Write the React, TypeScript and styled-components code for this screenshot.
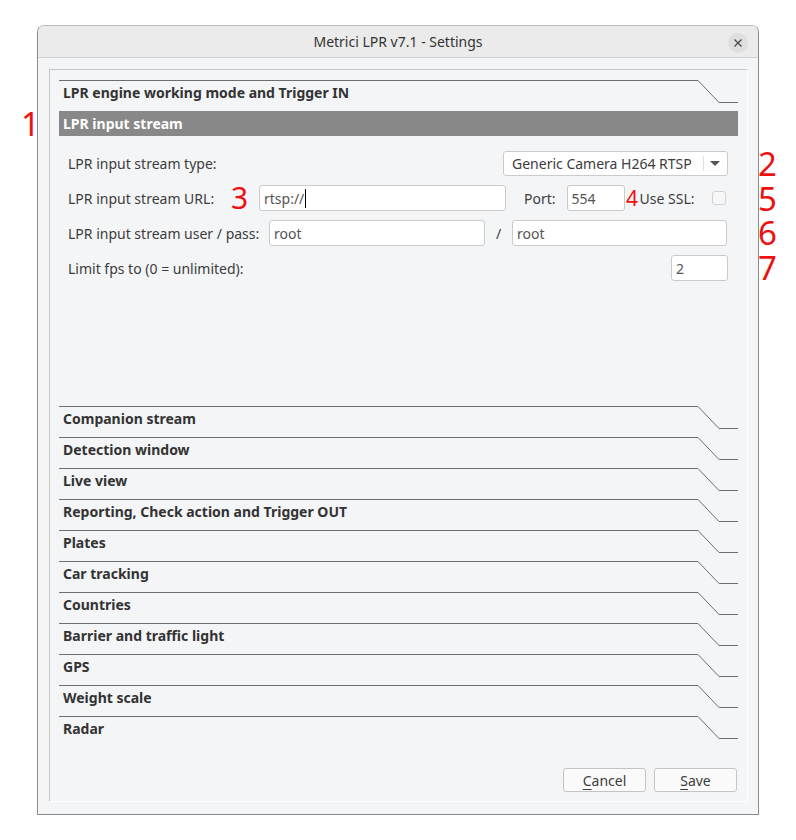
import React from "react";
import styled, { createGlobalStyle } from "styled-components";

const GlobalStyle = createGlobalStyle`
  html, body {
    margin: 0;
    background: #ffffff;
  }
  body {
    font-family: "Noto Sans", "Open Sans", sans-serif;
    font-size: 14px;
    color: #3c3c3c;
  }
`;

const sections = [
  "Companion stream",
  "Detection window",
  "Live view",
  "Reporting, Check action and Trigger OUT",
  "Plates",
  "Car tracking",
  "Countries",
  "Barrier and traffic light",
  "GPS",
  "Weight scale",
  "Radar",
];

const Page = styled.div`
  position: relative;
  width: 796px;
  height: 840px;
  padding: 25px 0 0 37px;
  box-sizing: border-box;
`;

const Window = styled.div`
  width: 722px;
  height: 790px;
  box-sizing: border-box;
  border: 1px solid #8c8c8c;
  border-top-color: #bdbdbd;
  border-radius: 7px 7px 0 0;
  background: #f4f5f7;
  display: flex;
  flex-direction: column;
  overflow: hidden;
`;

const TitleBar = styled.div`
  height: 31px;
  flex: none;
  background: #ebebeb;
  border-bottom: 1px solid #d2d2d2;
  display: flex;
  align-items: center;
  justify-content: center;
  position: relative;
`;

const Title = styled.span`
  font-size: 14px;
  color: #333;
`;

const CloseButton = styled.button`
  position: absolute;
  right: 10px;
  top: 7px;
  width: 20px;
  height: 20px;
  border-radius: 50%;
  border: none;
  padding: 0;
  background: #dedede;
  display: flex;
  align-items: center;
  justify-content: center;
`;

const Body = styled.div`
  flex: 1;
  padding: 11px 10px 12px 11px;
  display: flex;
`;

const Frame = styled.div`
  flex: 1;
  border-top: 1px solid #c8c8c8;
  border-left: 1px solid #c8c8c8;
  border-right: 1px solid #ffffff;
  border-bottom: 1px solid #ffffff;
  padding: 10px 9px 9px 9px;
  display: flex;
  flex-direction: column;
`;

const Header = styled.div`
  height: 31px;
  flex: none;
  display: flex;
`;

const HeaderLabel = styled.div`
  flex: 1;
  border-top: 1px solid #6e6e6e;
  padding-left: 4px;
  line-height: 23px;
  font-weight: 700;
  color: #333;
  white-space: nowrap;
`;

const HeaderCorner = styled.svg`
  flex: none;
  width: 40px;
  height: 23px;
`;

const ActiveHeader = styled.div`
  height: 25px;
  flex: none;
  background: #888888;
  color: #ffffff;
  font-weight: 700;
  padding-left: 4px;
  line-height: 25px;
`;

const Panel = styled.div`
  height: 270px;
  flex: none;
  padding: 14px 10px 0 9px;
  display: flex;
  flex-direction: column;
  gap: 9px;
  box-sizing: border-box;
`;

const Row = styled.div`
  height: 26px;
  display: flex;
  align-items: center;
`;

const Label = styled.span<{ $w?: number }>`
  flex: none;
  width: ${(p) => (p.$w ? `${p.$w}px` : "auto")};
  white-space: nowrap;
  color: #3c3c3c;
`;

const Field = styled.div<{ $w: number; $ml?: number }>`
  flex: none;
  width: ${(p) => p.$w}px;
  height: 26px;
  margin-left: ${(p) => p.$ml ?? 0}px;
  box-sizing: border-box;
  background: #ffffff;
  border: 1px solid #cbcbcb;
  border-radius: 3px;
  padding-left: 4px;
  display: flex;
  align-items: center;
  color: #555;
`;

const Caret = styled.span`
  display: inline-block;
  width: 0;
  height: 19px;
  border-left: 1px solid #000;
  margin-left: 1px;
`;

const Combo = styled.div`
  margin-left: auto;
  width: 225px;
  height: 25px;
  box-sizing: border-box;
  background: #ffffff;
  border: 1px solid #cbcbcb;
  border-radius: 3px;
  display: flex;
  align-items: center;
  padding-left: 8px;
  color: #3c3c3c;
`;

const ComboText = styled.span`
  flex: 1;
  white-space: nowrap;
`;

const ComboArrow = styled.div`
  width: 22px;
  height: 15px;
  border-left: 1px solid #e0e0e0;
  display: flex;
  align-items: center;
  justify-content: center;
  margin-right: 1px;
`;

const Check = styled.div`
  flex: none;
  width: 14px;
  height: 14px;
  box-sizing: border-box;
  border: 1px solid #d2d2d2;
  border-radius: 3px;
  background: #f7f7f7;
  margin-left: auto;
  margin-right: 2px;
`;

const Mark = styled.span<{ $size: number; $w?: number }>`
  flex: none;
  width: ${(p) => (p.$w ? `${p.$w}px` : "auto")};
  font-size: ${(p) => p.$size}px;
  line-height: 1;
  color: #ee1111;
  text-align: center;
`;

/* red callout numbers sitting outside the dialog frame */
const SideMark = styled.span<{ $x: number; $y: number }>`
  position: absolute;
  left: ${(p) => p.$x}px;
  top: ${(p) => p.$y}px;
  font-size: 33px;
  line-height: 26px;
  color: #ee1111;
`;

const SideColumn = styled.div`
  position: absolute;
  left: 758px;
  top: 147px;
  font-size: 33px;
  line-height: 34.7px;
  white-space: pre;
  color: #ee1111;
`;

const Footer = styled.div`
  margin-top: auto;
  margin-right: 1px;
  display: flex;
  justify-content: flex-end;
  gap: 8px;
`;

const Button = styled.button`
  width: 83px;
  height: 24px;
  box-sizing: border-box;
  border: 1px solid #c4c4c4;
  border-radius: 3px;
  background: #fafafa;
  font-family: inherit;
  font-size: 14px;
  color: #3c3c3c;
  padding: 0;

  u {
    text-decoration-thickness: 1px;
    text-underline-offset: 3px;
  }
`;

function SectionHeader({ title }: { title: string }) {
  return (
    <Header>
      <HeaderLabel>{title}</HeaderLabel>
      <HeaderCorner viewBox="0 0 40 23">
        <path d="M0 0.5 L21 22.5 L40 22.5" fill="none" stroke="#6e6e6e" strokeWidth="1" />
      </HeaderCorner>
    </Header>
  );
}

export default function App() {
  return (
    <Page>
      <GlobalStyle />
      <Window>
        <TitleBar>
          <Title>Metrici LPR v7.1 - Settings</Title>
          <CloseButton aria-label="Close">
            <svg width="8" height="8" viewBox="0 0 8 8">
              <path d="M0.5 0.5 L7.5 7.5 M7.5 0.5 L0.5 7.5" stroke="#444" strokeWidth="1.2" />
            </svg>
          </CloseButton>
        </TitleBar>
        <Body>
          <Frame>
            <SectionHeader title="LPR engine working mode and Trigger IN" />
            <ActiveHeader>LPR input stream</ActiveHeader>
            <Panel>
              <Row>
                <Label>LPR input stream type:</Label>
                <Combo>
                  <ComboText>Generic Camera H264 RTSP</ComboText>
                  <ComboArrow>
                    <svg width="10" height="5" viewBox="0 0 10 5">
                      <path d="M0 0 L10 0 L5 5 Z" fill="#555" />
                    </svg>
                  </ComboArrow>
                </Combo>
              </Row>
              <Row>
                <Label $w={163}>LPR input stream URL:</Label>
                <Mark $size={30} $w={17}>3</Mark>
                <Field $w={247} $ml={11}>
                  rtsp://<Caret />
                </Field>
                <Label style={{ marginLeft: 18 }}>Port:</Label>
                <Field $w={58} $ml={11}>554</Field>
                <Mark $size={21} $w={15}>4</Mark>
                <Label>Use SSL:</Label>
                <Check />
              </Row>
              <Row>
                <Label $w={201}>LPR input stream user / pass:</Label>
                <Field $w={216}>root</Field>
                <Label $w={27} style={{ textAlign: "center" }}>/</Label>
                <Field $w={215}>root</Field>
              </Row>
              <Row>
                <Label>Limit fps to (0 = unlimited):</Label>
                <Field $w={57} style={{ marginLeft: "auto" }}>2</Field>
              </Row>
            </Panel>
            {sections.map((s) => (
              <SectionHeader key={s} title={s} />
            ))}
            <Footer>
              <Button>
                <u>C</u>ancel
              </Button>
              <Button>
                <u>S</u>ave
              </Button>
            </Footer>
          </Frame>
        </Body>
      </Window>
      <SideMark $x={21} $y={111}>1</SideMark>
      <SideColumn>{"2\n5\n6\n7"}</SideColumn>
    </Page>
  );
}
